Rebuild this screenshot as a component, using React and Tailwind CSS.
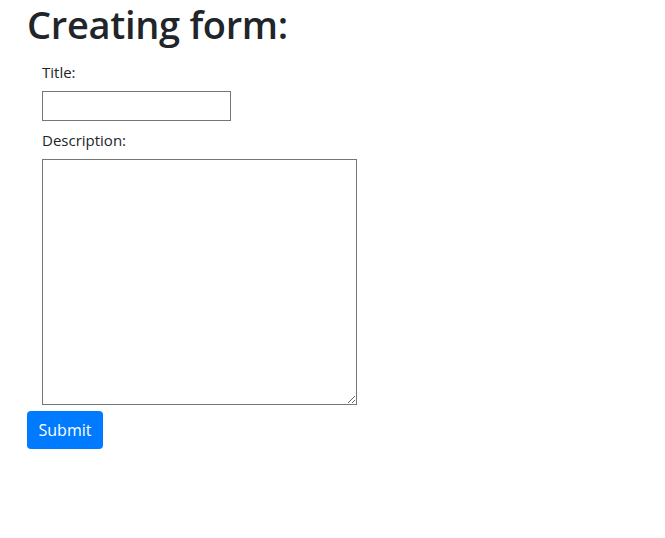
export default function App() {
  return (
    <div className="bg-white min-h-[538px] px-[27px] text-[#212529]" style={{ fontFamily: '"Open Sans", "Noto Sans", sans-serif' }}>
      <h1 className="text-[38px] leading-[48px] font-semibold mb-2 tracking-[-0.3px]">Creating form:</h1>
      <form className="flex flex-col items-start">
        <div className="pl-[15px] flex flex-col items-start">
          <label className="block mt-1 text-[15px] leading-6">Title:</label>
          <input type="text" className="mt-[7px] w-[189px] h-[30px] border border-[#767676] bg-white" />
          <label className="block mt-[7px] text-[15px] leading-6">Description:</label>
          <textarea className="mt-[7px] w-[315px] h-[246px] border border-[#767676] bg-white resize" />
        </div>
        <button type="button" className="mt-[6px] h-[38px] w-[76px] rounded bg-[#007bff] text-white text-base leading-6">
          Submit
        </button>
      </form>
    </div>
  )
}
